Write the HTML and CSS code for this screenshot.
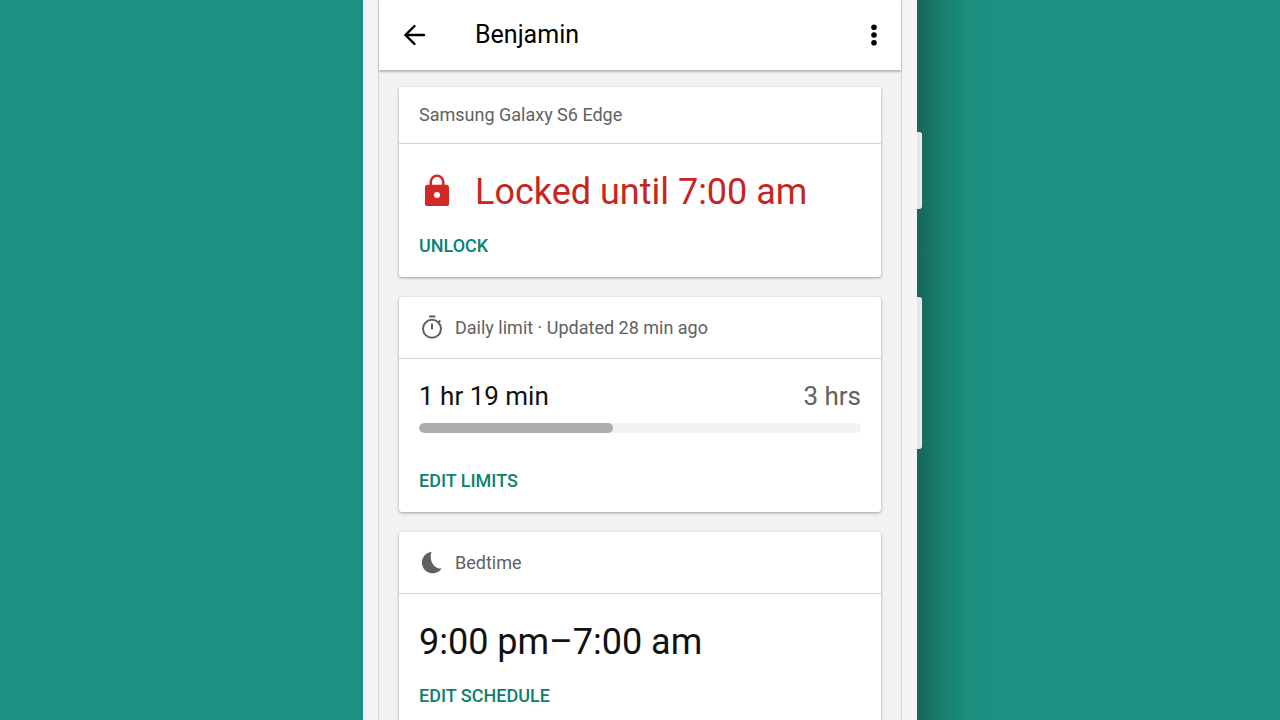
FILE: index.html
```html
<!DOCTYPE html>
<html lang="en">
<head>
  <meta charset="UTF-8">
  <title>Benjamin</title>
  <meta name="viewport" content="width=device-width, initial-scale=1.0">
  <link rel="stylesheet" href="styles.css">
</head>
<body>
  <div class="phone">
    <span class="side-button power"></span>
    <span class="side-button volume"></span>

    <div class="screen">
      <header class="app-bar">
        <button class="icon-btn" type="button" aria-label="Back">
          <svg width="32" height="32" viewBox="0 0 32 32" fill="none" stroke="#000" stroke-width="2.4" stroke-linecap="round">
            <path d="M25 16H7M15.500 7L6.500 16l9 9"/>
          </svg>
        </button>
        <h1>Benjamin</h1>
        <button class="icon-btn" type="button" aria-label="More options">
          <svg width="32" height="32" viewBox="0 0 32 32" fill="#000">
            <circle cx="16" cy="8.300" r="2.800"/>
            <circle cx="16" cy="16" r="2.800"/>
            <circle cx="16" cy="23.700" r="2.800"/>
          </svg>
        </button>
      </header>

      <main class="cards">
        <!-- Device status -->
        <section class="card">
          <h2 class="card-header device">Samsung Galaxy S6 Edge</h2>
          <div class="card-body">
            <div class="headline locked">
              <svg width="36" height="36" viewBox="0 0 36 36">
                <path d="M11.800 12V8a6.200 6.200 0 0 1 12.400 0V12" fill="none" stroke="#d12a26" stroke-width="2.600"/>
                <rect x="6" y="10.800" width="24" height="21.200" rx="2.600" fill="#d12a26"/>
                <circle cx="18" cy="21" r="3" fill="#fff"/>
              </svg>
              <span>Locked until 7:00 am</span>
            </div>
            <button class="action" type="button">UNLOCK</button>
          </div>
        </section>

        <!-- Daily limit -->
        <section class="card">
          <h2 class="card-header">
            <svg width="26" height="26" viewBox="0 0 26 26" fill="none" stroke="#616161" stroke-width="2">
              <circle cx="13" cy="13.800" r="9"/>
              <path d="M10 1.500h6.400M13 8.500v6M19.300 7.500l2-2"/>
            </svg>
            Daily limit · Updated 28 min ago
          </h2>
          <div class="card-body limit">
            <div class="usage">
              <span>1 hr 19 min</span>
              <span class="total">3 hrs</span>
            </div>
            <div class="bar" role="progressbar" aria-label="Time used" aria-valuemin="0" aria-valuemax="180" aria-valuenow="79">
              <div class="bar-fill" style="width: 44%"></div>
            </div>
            <button class="action" type="button">EDIT LIMITS</button>
          </div>
        </section>

        <!-- Bedtime -->
        <section class="card">
          <h2 class="card-header">
            <svg width="26" height="26" viewBox="0 0 26 26" fill="#616161">
              <path d="M12.500 1.800A10.800 10.800 0 1 0 22.700 18.500C15.500 19 9.500 11 12.500 1.800Z"/>
            </svg>
            Bedtime
          </h2>
          <div class="card-body">
            <div class="headline">9:00 pm–7:00 am</div>
            <button class="action" type="button">EDIT SCHEDULE</button>
          </div>
        </section>
      </main>
    </div>
  </div>
</body>
</html>
```
FILE: styles.css
```css
* {
  box-sizing: border-box;
}
body {
  margin: 0;
  height: 100vh;
  overflow: hidden;
  background-color: #1b9182;
  font-family: Roboto, sans-serif;
  color: #111;
}
h1, h2 {
  margin: 0;
  font-weight: 400;
}
button {
  padding: 0;
  border: none;
  background: none;
  font-family: inherit;
  cursor: pointer;
}
svg {
  display: block;
  flex-shrink: 0;
}

/* Phone body */
.phone {
  position: relative;
  width: 100%;
  max-width: 554px;
  min-height: 100vh;
  margin: 0 auto;
  padding: 0 15px;
  background-color: #f4f4f4;
}
.phone::after {
  content: "";
  position: absolute;
  top: 0;
  bottom: 0;
  left: 100%;
  width: 76px;
  background: linear-gradient(to right, rgba(16, 60, 52, 0.5), rgba(20, 80, 60, 0.32) 30%, rgba(24, 120, 80, 0.15) 65%, rgba(27, 145, 130, 0));
}
.side-button {
  position: absolute;
  left: 100%;
  z-index: 1;
  width: 5px;
  border-radius: 0 3px 3px 0;
  background-color: #e6e6e6;
  border-right: 1px solid #f2f2f2;
}
.power {
  top: 132px;
  height: 77px;
}
.volume {
  top: 297px;
  height: 152px;
}
.screen {
  min-height: 100vh;
  border: 1px solid #d6d6d6;
  border-width: 0 1px;
  background-color: #f2f2f2;
}

/* Top bar */
.app-bar {
  display: flex;
  align-items: center;
  height: 70px;
  padding: 0 11px 0 20px;
  background-color: #fff;
  box-shadow: 0 2px 2px rgba(0, 0, 0, 0.25);
}
.app-bar h1 {
  flex: 1;
  padding-left: 44px;
  font-size: 25px;
  line-height: 32px;
  color: #000;
}

/* Cards */
.cards {
  display: flex;
  flex-direction: column;
  gap: 20px;
  padding: 17px 20px;
}
.card {
  border-radius: 3px;
  background-color: #fff;
  box-shadow: 0 1px 3px rgba(0, 0, 0, 0.35);
}
.card-header {
  display: flex;
  align-items: center;
  gap: 10px;
  height: 62px;
  padding: 0 20px;
  border-bottom: 1px solid #d4d4d4;
  font-size: 18px;
  line-height: 24px;
  color: #616161;
}
.device {
  height: 57px;
}
.card-body {
  padding: 26px 20px 19px;
}
.headline {
  display: flex;
  align-items: center;
  margin-bottom: 20px;
  font-size: 36px;
  line-height: 44px;
}
.locked {
  gap: 20px;
  color: #c62622;
}
.action {
  display: block;
  font-size: 18px;
  font-weight: 500;
  line-height: 24px;
  color: #0c826e;
}

/* Daily limit usage */
.limit {
  padding-top: 21px;
}
.usage {
  display: flex;
  justify-content: space-between;
  font-size: 26px;
  line-height: 32px;
}
.total {
  color: #616161;
}
.bar {
  height: 10px;
  margin: 11px 0 36px;
  border-radius: 5px;
  background-color: #f2f2f2;
  overflow: hidden;
}
.bar-fill {
  height: 100%;
  border-radius: 5px;
  background-color: #adadad;
}
```
